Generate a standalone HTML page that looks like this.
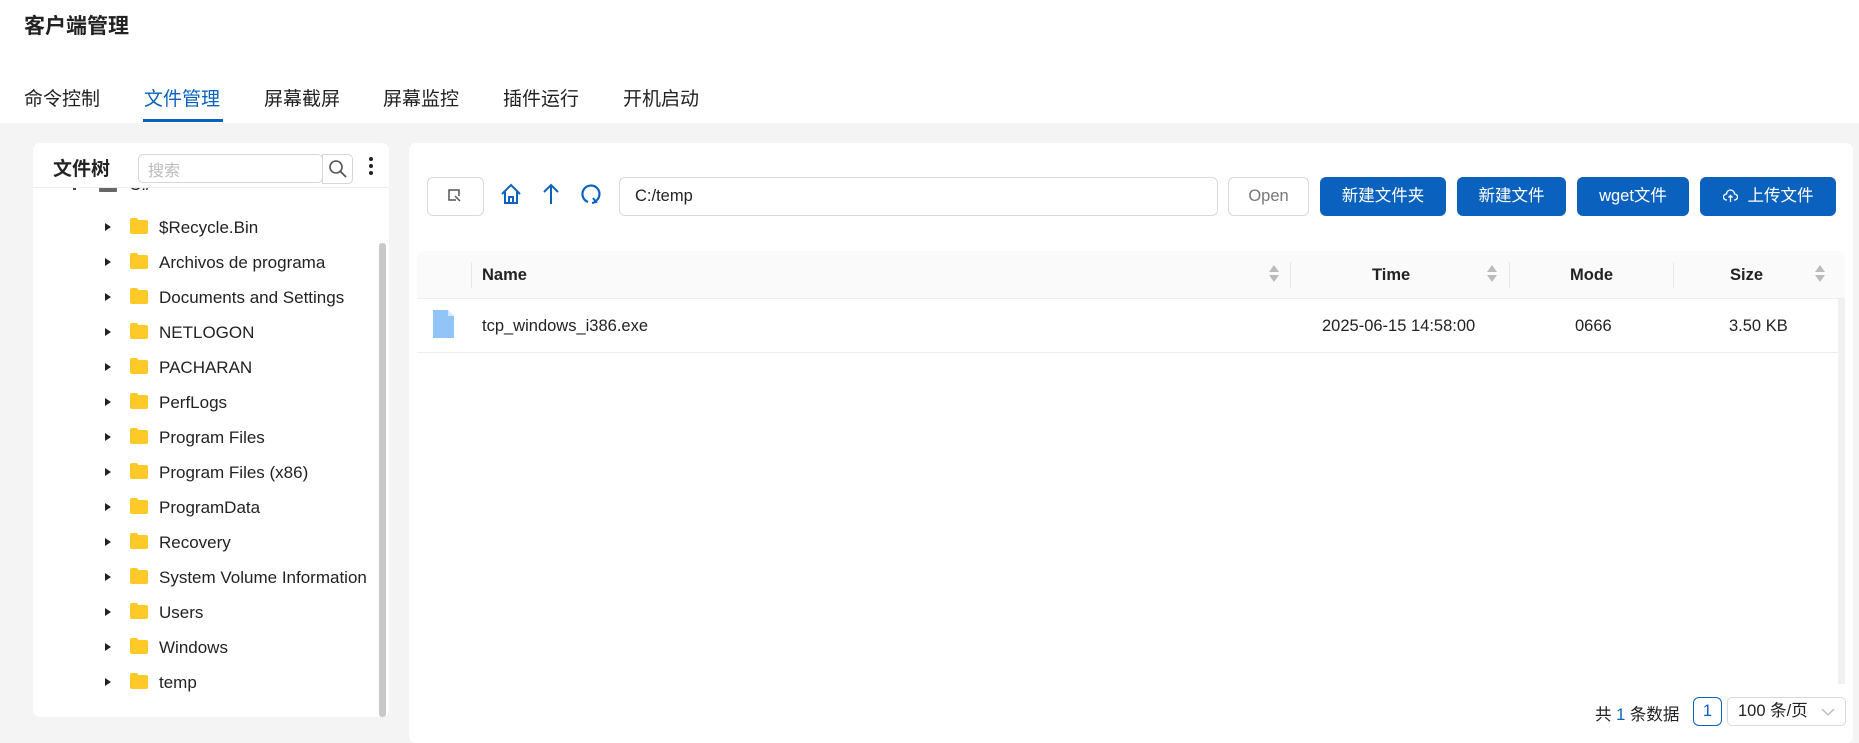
<!DOCTYPE html>
<html><head><meta charset="utf-8"><style>
*{box-sizing:border-box;margin:0;padding:0}
body{width:1859px;height:729px;overflow:hidden;background:#f4f4f4;font-family:"Liberation Sans","Noto Sans CJK SC",sans-serif;color:#222;position:relative}
.top{position:absolute;left:0;top:0;width:1859px;height:123px;background:#fff}
.title{position:absolute;left:24px;top:10px;font-size:21px;font-weight:bold;color:#222}
.tab{position:absolute;top:84px;font-size:19px;color:#222}
.tab.on{color:#0b62be}
.uline{position:absolute;left:143px;top:119px;width:80px;height:3px;background:#0b62be}
.lp{position:absolute;left:33px;top:143px;width:356px;height:574px;background:#fff;border-radius:7px;overflow:hidden}
.rp{position:absolute;left:409px;top:143px;width:1444px;height:600px;background:#fff;border-radius:7px}
.abs{position:absolute}
.tr{position:absolute;left:0;height:35px;font-size:17px;line-height:35px;color:#222}
.arr{position:absolute;left:72px;top:13px;width:0;height:0;border-left:6px solid #222;border-top:4.5px solid transparent;border-bottom:4.5px solid transparent}
.fold{position:absolute;left:97px;top:10px;width:18px;height:14px;background:#ffc928;border-radius:2px}
.fold:before{content:"";position:absolute;left:0;top:-2px;width:8px;height:3px;background:#ffc928;border-radius:2px 2px 0 0}
.tx{position:absolute;left:126px;white-space:nowrap}
.btn{position:absolute;top:177px;height:39px;border-radius:6px;background:#0b62be;color:#fff;font-size:16.5px;line-height:39px;text-align:center}
.th{position:absolute;top:251px;height:48px;line-height:48px;font-size:16.5px;font-weight:bold;color:#222}
.sep{position:absolute;top:262px;width:1px;height:26px;background:#e8e8e8}
.sort{position:absolute;top:265px;width:10px;height:20px}
.sort:before{content:"";position:absolute;left:0;top:0;border-left:5px solid transparent;border-right:5px solid transparent;border-bottom:7px solid #bbb}
.sort:after{content:"";position:absolute;left:0;top:10px;border-left:5px solid transparent;border-right:5px solid transparent;border-top:7px solid #bbb}
.td{position:absolute;top:299px;height:54px;line-height:54px;font-size:16.5px;color:#222}
</style></head><body>
<div class="top"></div>
<div class="title">客户端管理</div>
<div class="tab" style="left:24px">命令控制</div>
<div class="tab on" style="left:144px">文件管理</div>
<div class="tab" style="left:264px">屏幕截屏</div>
<div class="tab" style="left:383px">屏幕监控</div>
<div class="tab" style="left:503px">插件运行</div>
<div class="tab" style="left:623px">开机启动</div>
<div class="uline"></div>

<div class="lp">
 <div class="abs" style="left:20px;top:11px;font-size:19px;font-weight:bold">文件树</div>
 <div class="abs" style="left:105px;top:11px;width:185px;height:29px;border:1px solid #d6d6d6;border-radius:5px"></div>
 <div class="abs" style="left:115px;top:14px;font-size:16px;color:#bbb">搜索</div>
 <div class="abs" style="left:289px;top:11px;width:31px;height:30px;border:1px solid #d6d6d6;border-radius:0 5px 5px 0"></div>
 <svg class="abs" style="left:295px;top:16px" width="20" height="20" viewBox="0 0 20 20"><circle cx="8" cy="8" r="6" fill="none" stroke="#555" stroke-width="1.6"/><path d="M12.5 12.5L18 18" stroke="#555" stroke-width="1.8"/></svg>
 <div class="abs" style="left:336px;top:14px;width:4px;height:4px;border-radius:2px;background:#222;box-shadow:0 7px 0 #222,0 14px 0 #222"></div>
 <div class="abs" style="left:0;top:44px;width:356px;height:1px;background:#eee"></div>
 <div class="abs" style="left:0;top:45px;width:356px;height:529px;overflow:hidden">
  <div class="abs" style="left:40px;top:0px;width:3px;height:2px;background:#444"></div>
  <div class="abs" style="left:66px;top:-4px;width:18px;height:8px;background:#666;border-radius:1px"></div>
  <div class="abs" style="left:96px;top:-13px;font-size:17px">C:/</div>
  <div class="abs" style="left:346px;top:55px;width:7px;height:474px;background:#c8c8c8;border-radius:3px"></div>
 </div>
 <div class="tr" style="top:67px"><div class="arr"></div><div class="fold"></div><span class="tx">$Recycle.Bin</span></div>
 <div class="tr" style="top:102px"><div class="arr"></div><div class="fold"></div><span class="tx">Archivos de programa</span></div>
 <div class="tr" style="top:137px"><div class="arr"></div><div class="fold"></div><span class="tx">Documents and Settings</span></div>
 <div class="tr" style="top:172px"><div class="arr"></div><div class="fold"></div><span class="tx">NETLOGON</span></div>
 <div class="tr" style="top:207px"><div class="arr"></div><div class="fold"></div><span class="tx">PACHARAN</span></div>
 <div class="tr" style="top:242px"><div class="arr"></div><div class="fold"></div><span class="tx">PerfLogs</span></div>
 <div class="tr" style="top:277px"><div class="arr"></div><div class="fold"></div><span class="tx">Program Files</span></div>
 <div class="tr" style="top:312px"><div class="arr"></div><div class="fold"></div><span class="tx">Program Files (x86)</span></div>
 <div class="tr" style="top:347px"><div class="arr"></div><div class="fold"></div><span class="tx">ProgramData</span></div>
 <div class="tr" style="top:382px"><div class="arr"></div><div class="fold"></div><span class="tx">Recovery</span></div>
 <div class="tr" style="top:417px"><div class="arr"></div><div class="fold"></div><span class="tx">System Volume Information</span></div>
 <div class="tr" style="top:452px"><div class="arr"></div><div class="fold"></div><span class="tx">Users</span></div>
 <div class="tr" style="top:487px"><div class="arr"></div><div class="fold"></div><span class="tx">Windows</span></div>
 <div class="tr" style="top:522px"><div class="arr"></div><div class="fold"></div><span class="tx">temp</span></div>
</div>

<div class="rp"></div>
<div class="abs" style="left:427px;top:177px;width:57px;height:39px;border:1px solid #d9d9d9;border-radius:6px"></div>
<svg class="abs" style="left:447px;top:188px" width="16" height="16" viewBox="0 0 16 16"><path d="M9 12H2V2h10v6" fill="none" stroke="#555" stroke-width="1.5"/><path d="M8 8l5 5" stroke="#555" stroke-width="1.5"/></svg>
<svg class="abs" style="left:499px;top:182px" width="24" height="24" viewBox="0 0 24 24"><path d="M3 12L12 3l9 9M6 9.5V21h12V9.5M10 21v-6h4v6" fill="none" stroke="#0b62be" stroke-width="2"/></svg>
<svg class="abs" style="left:541px;top:183px" width="20" height="22" viewBox="0 0 20 22"><path d="M10 21V2M3 9l7-7 7 7" fill="none" stroke="#0b62be" stroke-width="2"/></svg>
<svg class="abs" style="left:580px;top:183px" width="22" height="22" viewBox="0 0 22 22"><path d="M8 19A8.5 8.5 0 1 1 15 18.5" fill="none" stroke="#0b62be" stroke-width="2.2"/><path d="M13 15l3 4-4 1" fill="none" stroke="#0b62be" stroke-width="2"/></svg>
<div class="abs" style="left:619px;top:177px;width:599px;height:39px;border:1px solid #d9d9d9;border-radius:6px;font-size:16.5px;line-height:37px;padding-left:15px">C:/temp</div>
<div class="abs" style="left:1228px;top:177px;width:81px;height:39px;border:1px solid #d9d9d9;border-radius:6px;font-size:16.5px;line-height:37px;text-align:center;color:#777">Open</div>
<div class="btn" style="left:1320px;width:126px">新建文件夹</div>
<div class="btn" style="left:1457px;width:109px">新建文件</div>
<div class="btn" style="left:1577px;width:112px">wget文件</div>
<div class="btn" style="left:1700px;width:136px"><svg style="vertical-align:-2px;margin-right:10px" width="15" height="14" viewBox="0 0 15 14"><path d="M4 11H3.5a3 3 0 0 1 0-6 4 4 0 0 1 8 0 3 3 0 0 1 0 6H11M7.5 13V6.5M5.5 8.5l2-2 2 2" fill="none" stroke="#fff" stroke-width="1.3"/></svg>上传文件</div>

<div class="abs" style="left:417px;top:251px;width:1428px;height:48px;background:#fafafa;border-radius:8px 8px 0 0;border-bottom:1px solid #eee"></div>
<div class="sep" style="left:471px"></div><div class="sep" style="left:1290px"></div><div class="sep" style="left:1509px"></div><div class="sep" style="left:1673px"></div>
<div class="th" style="left:482px">Name</div>
<div class="sort" style="left:1269px"></div>
<div class="th" style="left:1372px">Time</div>
<div class="sort" style="left:1487px"></div>
<div class="th" style="left:1570px">Mode</div>
<div class="th" style="left:1730px">Size</div>
<div class="sort" style="left:1815px"></div>
<div class="abs" style="left:417px;top:352px;width:1421px;height:1px;background:#eee"></div>
<div class="abs" style="left:1838px;top:299px;width:7px;height:385px;background:#f1f1f1"></div>
<svg class="abs" style="left:433px;top:310px" width="21" height="28" viewBox="0 0 21 28"><path d="M0 0h15l6 6v22H0z" fill="#91c5f7"/><path d="M15 0v6h6z" fill="#d6eaff"/></svg>
<div class="td" style="left:482px">tcp_windows_i386.exe</div>
<div class="td" style="left:1322px">2025-06-15 14:58:00</div>
<div class="td" style="left:1575px">0666</div>
<div class="td" style="left:1729px">3.50 KB</div>

<div class="abs" style="left:1595px;top:701px;font-size:16.5px">共 <span style="color:#0b62be">1</span> 条数据</div>
<div class="abs" style="left:1693px;top:697px;width:29px;height:29px;border:1.5px solid #0b62be;border-radius:6px;text-align:center;line-height:26px;font-size:16.5px;color:#0b62be">1</div>
<div class="abs" style="left:1727px;top:697px;width:119px;height:29px;border:1px solid #d9d9d9;border-radius:5px;font-size:16.5px;line-height:27px;padding-left:10px">100 条/页<svg style="position:absolute;right:10px;top:10px" width="14" height="8" viewBox="0 0 14 8"><path d="M1 1l6 6 6-6" fill="none" stroke="#bbb" stroke-width="1.3"/></svg></div>
</body></html>
